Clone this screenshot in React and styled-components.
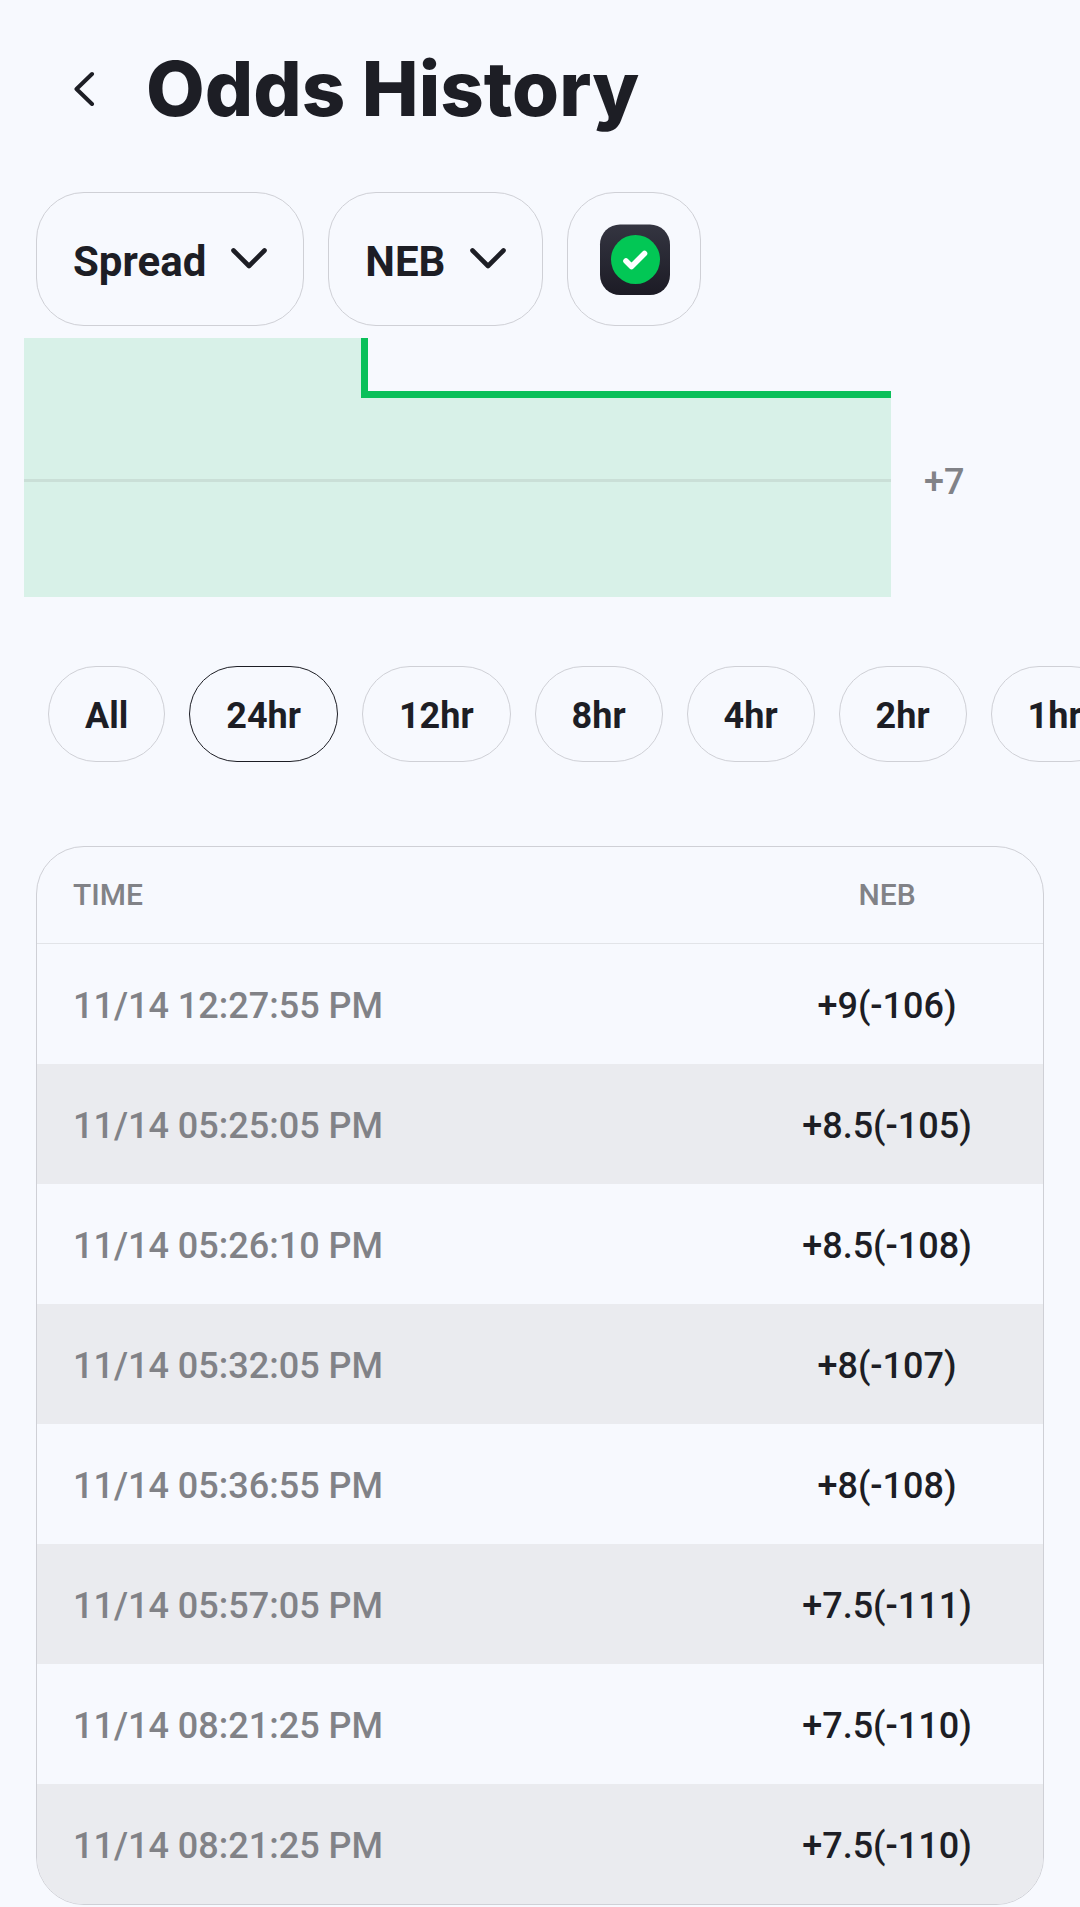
import React, { useState } from "react";
import styled, { createGlobalStyle } from "styled-components";

const COLORS = {
  background: "#f7f9fe",
  text: "#1d1e25",
  sub: "#818287",
  border: "#cfd0d6",
  divider: "#e2e4e8",
  stripe: "#eaebef",
  green: "#0bc05a",
  area: "#d8f1e8",
  grid: "#cadfd7",
};

const filters = [
  { name: "Market", options: ["Spread"] },
  { name: "Team", options: ["NEB"] },
];

const ranges = ["All", "24hr", "12hr", "8hr", "4hr", "2hr", "1hr"];

const history = [
  { time: "11/14 12:27:55 PM", odds: "+9(-106)" },
  { time: "11/14 05:25:05 PM", odds: "+8.5(-105)" },
  { time: "11/14 05:26:10 PM", odds: "+8.5(-108)" },
  { time: "11/14 05:32:05 PM", odds: "+8(-107)" },
  { time: "11/14 05:36:55 PM", odds: "+8(-108)" },
  { time: "11/14 05:57:05 PM", odds: "+7.5(-111)" },
  { time: "11/14 08:21:25 PM", odds: "+7.5(-110)" },
  { time: "11/14 08:21:25 PM", odds: "+7.5(-110)" },
];

const App = () => {
  const [range, setRange] = useState("24hr");

  return (
    <Page>
      <GlobalStyle />
      <Header>
        <BackButton type="button" aria-label="Back">
          <svg width="24" height="36" viewBox="0 0 24 36" fill="none">
            <path
              d="M20 4L4.5 19L20 34"
              stroke="currentColor"
              strokeWidth="4"
              strokeLinecap="round"
              strokeLinejoin="round"
            />
          </svg>
        </BackButton>
        <Title>Odds History</Title>
      </Header>

      <FilterRow>
        {filters.map(({ name, options }) => (
          <SelectBox key={name}>
            <FilterSelect aria-label={name}>
              {options.map((option) => (
                <option key={option}>{option}</option>
              ))}
            </FilterSelect>
            <Chevron viewBox="0 0 36 24" fill="none">
              <path
                d="M2.5 3.5L18 19L33.5 3.5"
                stroke="currentColor"
                strokeWidth="4.6"
                strokeLinecap="round"
                strokeLinejoin="round"
              />
            </Chevron>
          </SelectBox>
        ))}
        <BookButton type="button" aria-label="Sportsbook">
          <BookLogo />
        </BookButton>
      </FilterRow>

      <ChartBox>
        <Plot viewBox="0 0 867 259" preserveAspectRatio="none">
          <path d="M0 0H340V56H867V259H0Z" fill={COLORS.area} />
          <rect y="141" width="867" height="3" fill={COLORS.grid} />
          <path
            d="M340.5 0V56.5H867"
            fill="none"
            stroke={COLORS.green}
            strokeWidth="7"
          />
        </Plot>
        <Axis>+7</Axis>
      </ChartBox>

      <RangeRow>
        {ranges.map((item) => (
          <RangeButton
            key={item}
            type="button"
            $active={item === range}
            onClick={() => setRange(item)}
          >
            {item}
          </RangeButton>
        ))}
      </RangeRow>

      <TableBox>
        <Table>
          <thead>
            <tr>
              <HeadCell>TIME</HeadCell>
              <HeadCell $odds>NEB</HeadCell>
            </tr>
          </thead>
          <tbody>
            {history.map(({ time, odds }, index) => (
              <Row key={index}>
                <Cell>{time}</Cell>
                <Cell $odds>{odds}</Cell>
              </Row>
            ))}
          </tbody>
        </Table>
      </TableBox>
    </Page>
  );
};

const BookLogo = () => (
  <svg width="72" height="72" viewBox="0 0 72 72" fill="none">
    <defs>
      <linearGradient id="book-bg" x1="0" y1="0" x2="0" y2="1">
        <stop offset="0" stopColor="#343541" />
        <stop offset="1" stopColor="#1c1b25" />
      </linearGradient>
    </defs>
    <rect x="2" y="1.5" width="70" height="70.5" rx="20" fill="url(#book-bg)" />
    <circle cx="37.5" cy="36.5" r="24.5" fill="#02c755" />
    <path
      d="M28 38L33.5 43.5L46.5 30.5"
      stroke="#ffffff"
      strokeWidth="5.6"
      strokeLinecap="round"
      strokeLinejoin="round"
    />
  </svg>
);

export default App;

const GlobalStyle = createGlobalStyle`
  * {
    box-sizing: border-box;
  }
  body {
    margin: 0;
    background-color: ${COLORS.background};
    color: ${COLORS.text};
    font-family: Roboto, "Liberation Sans", sans-serif;
  }
  button, select {
    margin: 0;
    background: none;
    color: inherit;
    font-family: inherit;
    cursor: pointer;
  }
  svg {
    display: block;
  }
`;

const Page = styled.main`
  display: flex;
  flex-direction: column;
  min-height: 100vh;
`;

const Header = styled.header`
  display: flex;
  align-items: center;
  gap: 26px;
  height: 176px;
  padding: 0 48px;
`;

const BackButton = styled.button`
  display: flex;
  align-items: center;
  justify-content: center;
  width: 72px;
  height: 72px;
  padding: 0;
  border: none;
`;

const Title = styled.h1`
  margin: 0;
  font-family: Inter, "Open Sans", sans-serif;
  font-size: 76px;
  font-weight: 800;
  line-height: 96px;
  white-space: nowrap;
`;

const FilterRow = styled.div`
  display: flex;
  gap: 24px;
  padding: 16px 36px 12px;
`;

const SelectBox = styled.div`
  position: relative;
`;

const FilterSelect = styled.select`
  appearance: none;
  field-sizing: content;
  height: 134px;
  padding: 4px 97px 0 36px;
  border: 1px solid ${COLORS.border};
  border-radius: 48px;
  font-size: 42px;
  font-weight: 700;
`;

const Chevron = styled.svg`
  position: absolute;
  top: 55px;
  right: 37px;
  width: 36px;
  height: 24px;
  pointer-events: none;
`;

const BookButton = styled.button`
  display: flex;
  align-items: center;
  justify-content: center;
  width: 134px;
  height: 134px;
  padding: 0;
  border: 1px solid ${COLORS.border};
  border-radius: 48px;
`;

const ChartBox = styled.div`
  display: flex;
  padding-left: 24px;
`;

const Plot = styled.svg`
  flex: 1;
  min-width: 0;
  height: 259px;
`;

const Axis = styled.div`
  width: 189px;
  padding: 123px 0 0 33px;
  color: ${COLORS.sub};
  font-size: 36px;
  font-weight: 500;
  line-height: 42px;
`;

const RangeRow = styled.div`
  display: flex;
  gap: 24px;
  margin-top: 69px;
  padding: 0 48px;
  overflow-x: auto;
  scrollbar-width: none;
`;

const RangeButton = styled.button`
  flex-shrink: 0;
  height: 96px;
  padding: 4px 36px 0;
  border: 1px solid ${({ $active }) => ($active ? COLORS.text : COLORS.border)};
  border-radius: 48px;
  font-size: 36px;
  font-weight: 700;
`;

const TableBox = styled.div`
  margin: 84px 36px 0;
  border: 1px solid ${COLORS.border};
  border-radius: 48px;
  overflow: hidden;
`;

const Table = styled.table`
  width: 100%;
  border-spacing: 0;
  font-weight: 500;
`;

const HeadCell = styled.th`
  width: ${({ $odds }) => ($odds ? "276px" : "auto")};
  height: 97px;
  padding: 0 36px 2px ${({ $odds }) => ($odds ? "0" : "36px")};
  border-bottom: 1px solid ${COLORS.divider};
  color: ${COLORS.sub};
  font-size: 30px;
  font-weight: 500;
  text-align: ${({ $odds }) => ($odds ? "center" : "left")};
`;

const Row = styled.tr`
  &:nth-child(even) {
    background-color: ${COLORS.stripe};
  }
`;

const Cell = styled.td`
  height: 120px;
  padding: 4px 36px 0 ${({ $odds }) => ($odds ? "0" : "36px")};
  color: ${({ $odds }) => ($odds ? COLORS.text : COLORS.sub)};
  font-size: 36px;
  text-align: ${({ $odds }) => ($odds ? "center" : "left")};
`;
